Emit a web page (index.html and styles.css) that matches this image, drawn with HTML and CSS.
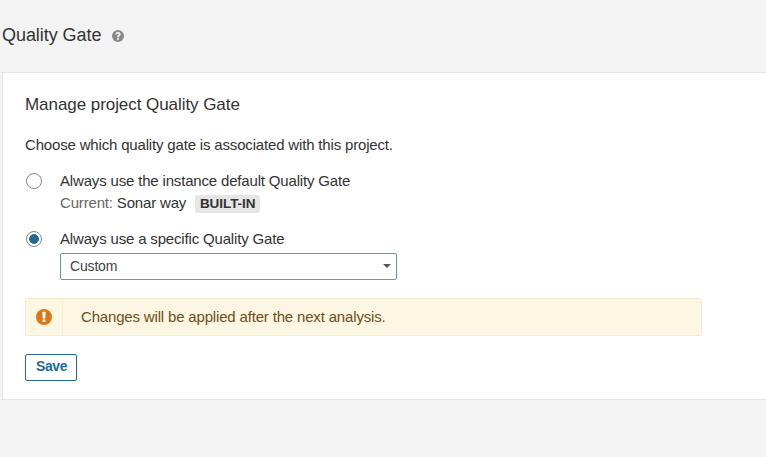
FILE: index.html
```html
<!DOCTYPE html>
<html lang="en">
<head>
<meta charset="utf-8">
<title>Quality Gate</title>
<link rel="stylesheet" href="styles.css">
</head>
<body>
<header class="page-header">
  <h1>Quality Gate</h1>
  <svg class="help" viewBox="0 0 12 12"><circle cx="6" cy="6" r="6"/><path d="M4.1 4.4Q4.3 2.9 6 2.9T7.8 4.4C7.8 5.7 6 5.5 6 7.2M6 8.1V9.8"/></svg>
</header>
<main class="panel">
  <h2>Manage project Quality Gate</h2>
  <p class="intro">Choose which quality gate is associated with this project.</p>
  <div class="option">
    <span class="radio"></span>
    <div>
      <div class="label">Always use the instance default Quality Gate</div>
      <div class="current"><span class="muted">Current:</span> Sonar way<span class="badge">BUILT-IN</span></div>
    </div>
  </div>
  <div class="option specific">
    <span class="radio checked"></span>
    <div>
      <div class="label">Always use a specific Quality Gate</div>
      <div class="select"><span>Custom</span><i class="arrow"></i></div>
    </div>
  </div>
  <div class="alert">
    <div class="alert-icon"><svg viewBox="0 0 16 16"><circle cx="8" cy="8" r="8"/><path d="M6.4 2.8h3.2L9.3 9.4H6.7zM6.6 10.6h2.8v2.4H6.6z"/></svg></div>
    <div class="alert-text">Changes will be applied after the next analysis.</div>
  </div>
  <button class="save">Save</button>
</main>
</body>
</html>
```

FILE: styles.css
```css
* { box-sizing: border-box; }
body { margin: 0; background: #f3f3f3; color: #333; font: 15px/22px "Liberation Sans", Arial, sans-serif; letter-spacing: -0.17px; overflow: hidden; }
h1, h2, p { margin: 0; font-weight: 400; }
.page-header { display: flex; align-items: center; height: 72px; padding: 0 0 2px 2px; }
h1 { font-size: 18px; line-height: 24px; width: 110px; white-space: nowrap; letter-spacing: -0.05px; }
.help { width: 12px; height: 12px; margin-top: 2px; fill: #888; }
.help path { fill: none; stroke: #f3f3f3; stroke-width: 1.8; }
.panel { margin-left: 2px; width: 790px; height: 328px; padding: 21px 22px; background: #fff; border: 1px solid #e6e6e6; }
h2 { font-size: 17px; line-height: 22px; letter-spacing: -0.06px; }
.intro { margin-top: 18px; }
.option { display: flex; gap: 18px; margin-top: 14px; }
.radio { width: 16px; height: 16px; margin: 3px 0 0 1px; border: 1px solid #858585; border-radius: 50%; }
.checked { background: radial-gradient(circle, #236a97 4.5px, #fff 5.2px); }
.muted { color: #666; }
.badge { display: inline-block; width: 65px; margin-left: 9px; text-align: center; height: 18px; line-height: 18px; font-size: 13.5px; font-weight: 700; letter-spacing: -0.05px; background: #e6e6e6; border-radius: 3px; }
.select { display: flex; align-items: center; justify-content: space-between; width: 337px; height: 27px; margin-top: 3px; padding: 0 5px 1px 9px; border: 1px solid #4b9fd5; border-radius: 2px; font-size: 14px; color: #444; }
.arrow { border: 4px solid transparent; border-top-color: #555; border-bottom: 0; }
.alert { display: flex; width: 677px; height: 38px; margin-top: 18px; background: #fdf6e3; border: 1px solid #faebcc; border-radius: 2px; color: #6f4f17; }
.alert-icon { display: flex; align-items: center; justify-content: center; width: 37px; border-right: 1px solid #faebcc; }
.alert-icon svg { width: 16px; height: 16px; fill: #db781a; }
.alert-icon path { fill: #fff; }
.alert-text { padding-left: 18px; line-height: 36px; }
.save { display: block; width: 52px; height: 27px; margin-top: 18px; padding: 0 0 3px 1px; background: #fff; border: 1px solid #236a97; border-radius: 2px; color: #236a97; font: 700 14px/20px "Liberation Sans", Arial, sans-serif; letter-spacing: -0.4px; }
```
